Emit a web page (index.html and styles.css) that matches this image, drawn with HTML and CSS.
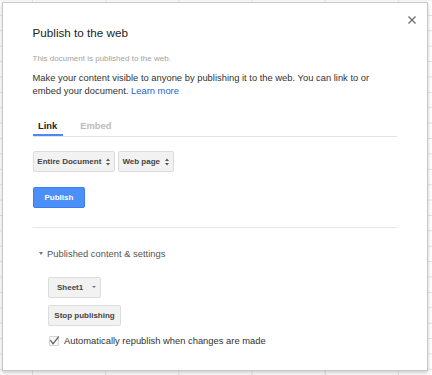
FILE: index.html
```html
<!DOCTYPE html>
<html lang="en">
<head>
    <meta charset="UTF-8">
    <meta name="viewport" content="width=device-width, initial-scale=1.0">
    <title>Publish to the web</title>
    <link rel="stylesheet" href="styles.css">
</head>
<body>
    <div class="sheet">
        <div class="dialog">
            <div class="dialog-header">
                <h1 class="dialog-title">Publish to the web</h1>
                <button class="close" aria-label="Close">
                    <svg width="8" height="8" viewBox="0 0 8 8"><path d="M0.5 0.5L7.5 7.5M7.5 0.5L0.5 7.5" stroke="#6b6b6b" stroke-width="1.2" fill="none"/></svg>
                </button>
            </div>
            <p class="status">This document is published to the web.</p>
            <p class="intro">Make your content visible to anyone by publishing it to the web. You can link to or embed your document. <a href="#">Learn more</a></p>

            <div class="tabs">
                <span class="tab active">Link</span>
                <span class="tab">Embed</span>
            </div>

            <div class="select-row">
                <button class="btn select">Entire Document
                    <svg class="updown" width="4" height="8" viewBox="0 0 4 8"><path d="M0 3L2 0.6L4 3Z M0 5L2 7.4L4 5Z" fill="#555"/></svg>
                </button>
                <button class="btn select">Web page
                    <svg class="updown" width="4" height="8" viewBox="0 0 4 8"><path d="M0 3L2 0.6L4 3Z M0 5L2 7.4L4 5Z" fill="#555"/></svg>
                </button>
            </div>

            <button class="btn primary">Publish</button>

            <hr class="divider">

            <div class="section-toggle"><span class="caret"></span>Published content &amp; settings</div>

            <div class="section-body">
                <button class="btn select sheet-select">Sheet1 <span class="caret small"></span></button>
                <button class="btn stop">Stop publishing</button>
                <label class="checkbox-row">
                    <span class="checkbox">
                        <svg width="10" height="10" viewBox="0 0 10 10"><path d="M1.4 4.2L4 7.8L9.8 0.6" stroke="#555" stroke-width="1.2" fill="none"/></svg>
                    </span>
                    Automatically republish when changes are made
                </label>
            </div>
        </div>
    </div>
</body>
</html>
```

FILE: styles.css
```css
html, body {
    margin: 0;
    height: 100%;
}

body {
    font-family: "Liberation Sans", Arial, sans-serif;
    background-color: #fff;
    background-image:
        linear-gradient(to right, #e4e4e4 1px, transparent 1px),
        linear-gradient(to bottom, #e4e4e4 1px, transparent 1px);
    background-size: 73.2px 100%, 100% 15.4px;
    background-position: 32px 0, 0 14.9px;
    overflow: hidden;
}

.sheet {
    padding: 2px 0 0 2px;
}

.dialog {
    width: 426px;
    height: 369px;
    box-sizing: border-box;
    background-color: #fff;
    border: 1px solid #c8c8c8;
    box-shadow: 0 2px 4px rgba(0,0,0,0.2);
    padding: 13px 30px 0 29.5px;
}

.dialog-header {
    display: flex;
    justify-content: space-between;
    align-items: flex-start;
    margin-right: -18.5px;
}

.dialog-title {
    margin: 9.5px 0 0;
    font-size: 11.7px;
    line-height: 14px;
    font-weight: normal;
    color: #222;
}

.close {
    border: none;
    background: none;
    padding: 0;
    width: 8px;
    height: 8px;
    cursor: pointer;
}

.close svg {
    display: block;
}

.status {
    margin: 14.4px 0 0;
    font-size: 8px;
    line-height: 10px;
    color: #a3a3a3;
}

.intro {
    margin: 8.4px 0 0;
    font-size: 9.4px;
    line-height: 12.3px;
    color: #333;
}

.intro a {
    color: #2660d2;
    text-decoration: none;
}

.tabs {
    margin-top: 22.8px;
    display: flex;
    gap: 12px;
    border-bottom: 1px solid #e3e3e3;
}

.tab {
    font-size: 9.4px;
    line-height: 12px;
    font-weight: bold;
    padding: 0 5.5px 2.3px;
    border-bottom: 2px solid transparent;
    color: #bbb;
}

.tab.active {
    color: #222;
    border-bottom-color: #4a8af4;
}

.select-row {
    margin-top: 14.3px;
    display: flex;
    gap: 2.3px;
}

.btn {
    font-family: inherit;
    font-size: 8px;
    font-weight: bold;
    color: #444;
    background-color: #f2f2f2;
    border: 1px solid #dcdcdc;
    border-radius: 2px;
    height: 21px;
    box-sizing: border-box;
    margin: 0;
    padding: 0 5px;
    display: flex;
    align-items: center;
    white-space: nowrap;
    cursor: pointer;
}

.select {
    padding: 0 4px 0 3.8px;
    gap: 5px;
}

.updown {
    display: block;
}

.primary {
    margin-top: 14.7px;
    padding: 0 11px;
    background-color: #4d8ff8;
    border-color: #3b7fe8;
    color: #fff;
}

.divider {
    margin: 19.3px 0 0;
    border: none;
    border-top: 1px solid #e6e6e6;
    height: 0;
}

.section-toggle {
    margin-top: 19.7px;
    display: flex;
    align-items: center;
    gap: 4.6px;
    padding-left: 6px;
    font-size: 9.4px;
    line-height: 12px;
    color: #555;
}

.caret {
    width: 0;
    height: 0;
    border-left: 2.5px solid transparent;
    border-right: 2.5px solid transparent;
    border-top: 3px solid #777;
}

.caret.small {
    border-left-width: 2px;
    border-right-width: 2px;
    border-top-width: 2.5px;
}

.section-body {
    padding-left: 15.8px;
    display: flex;
    flex-direction: column;
    align-items: flex-start;
}

.sheet-select {
    margin-top: 16.7px;
    padding: 0 4px 0 7.7px;
    gap: 9px;
}

.stop {
    margin-top: 7px;
}

.checkbox-row {
    margin-top: 9px;
    display: flex;
    align-items: center;
    gap: 4.7px;
    font-size: 9.4px;
    line-height: 12px;
    color: #333;
}

.checkbox {
    width: 10px;
    height: 10px;
    margin-left: 1px;
    box-sizing: border-box;
    border: 1px solid #d4d4d4;
    border-radius: 1px;
    background-color: #f7f7f7;
}

.checkbox svg {
    display: block;
    margin: -1px 0 0 -1px;
    overflow: visible;
}
```
